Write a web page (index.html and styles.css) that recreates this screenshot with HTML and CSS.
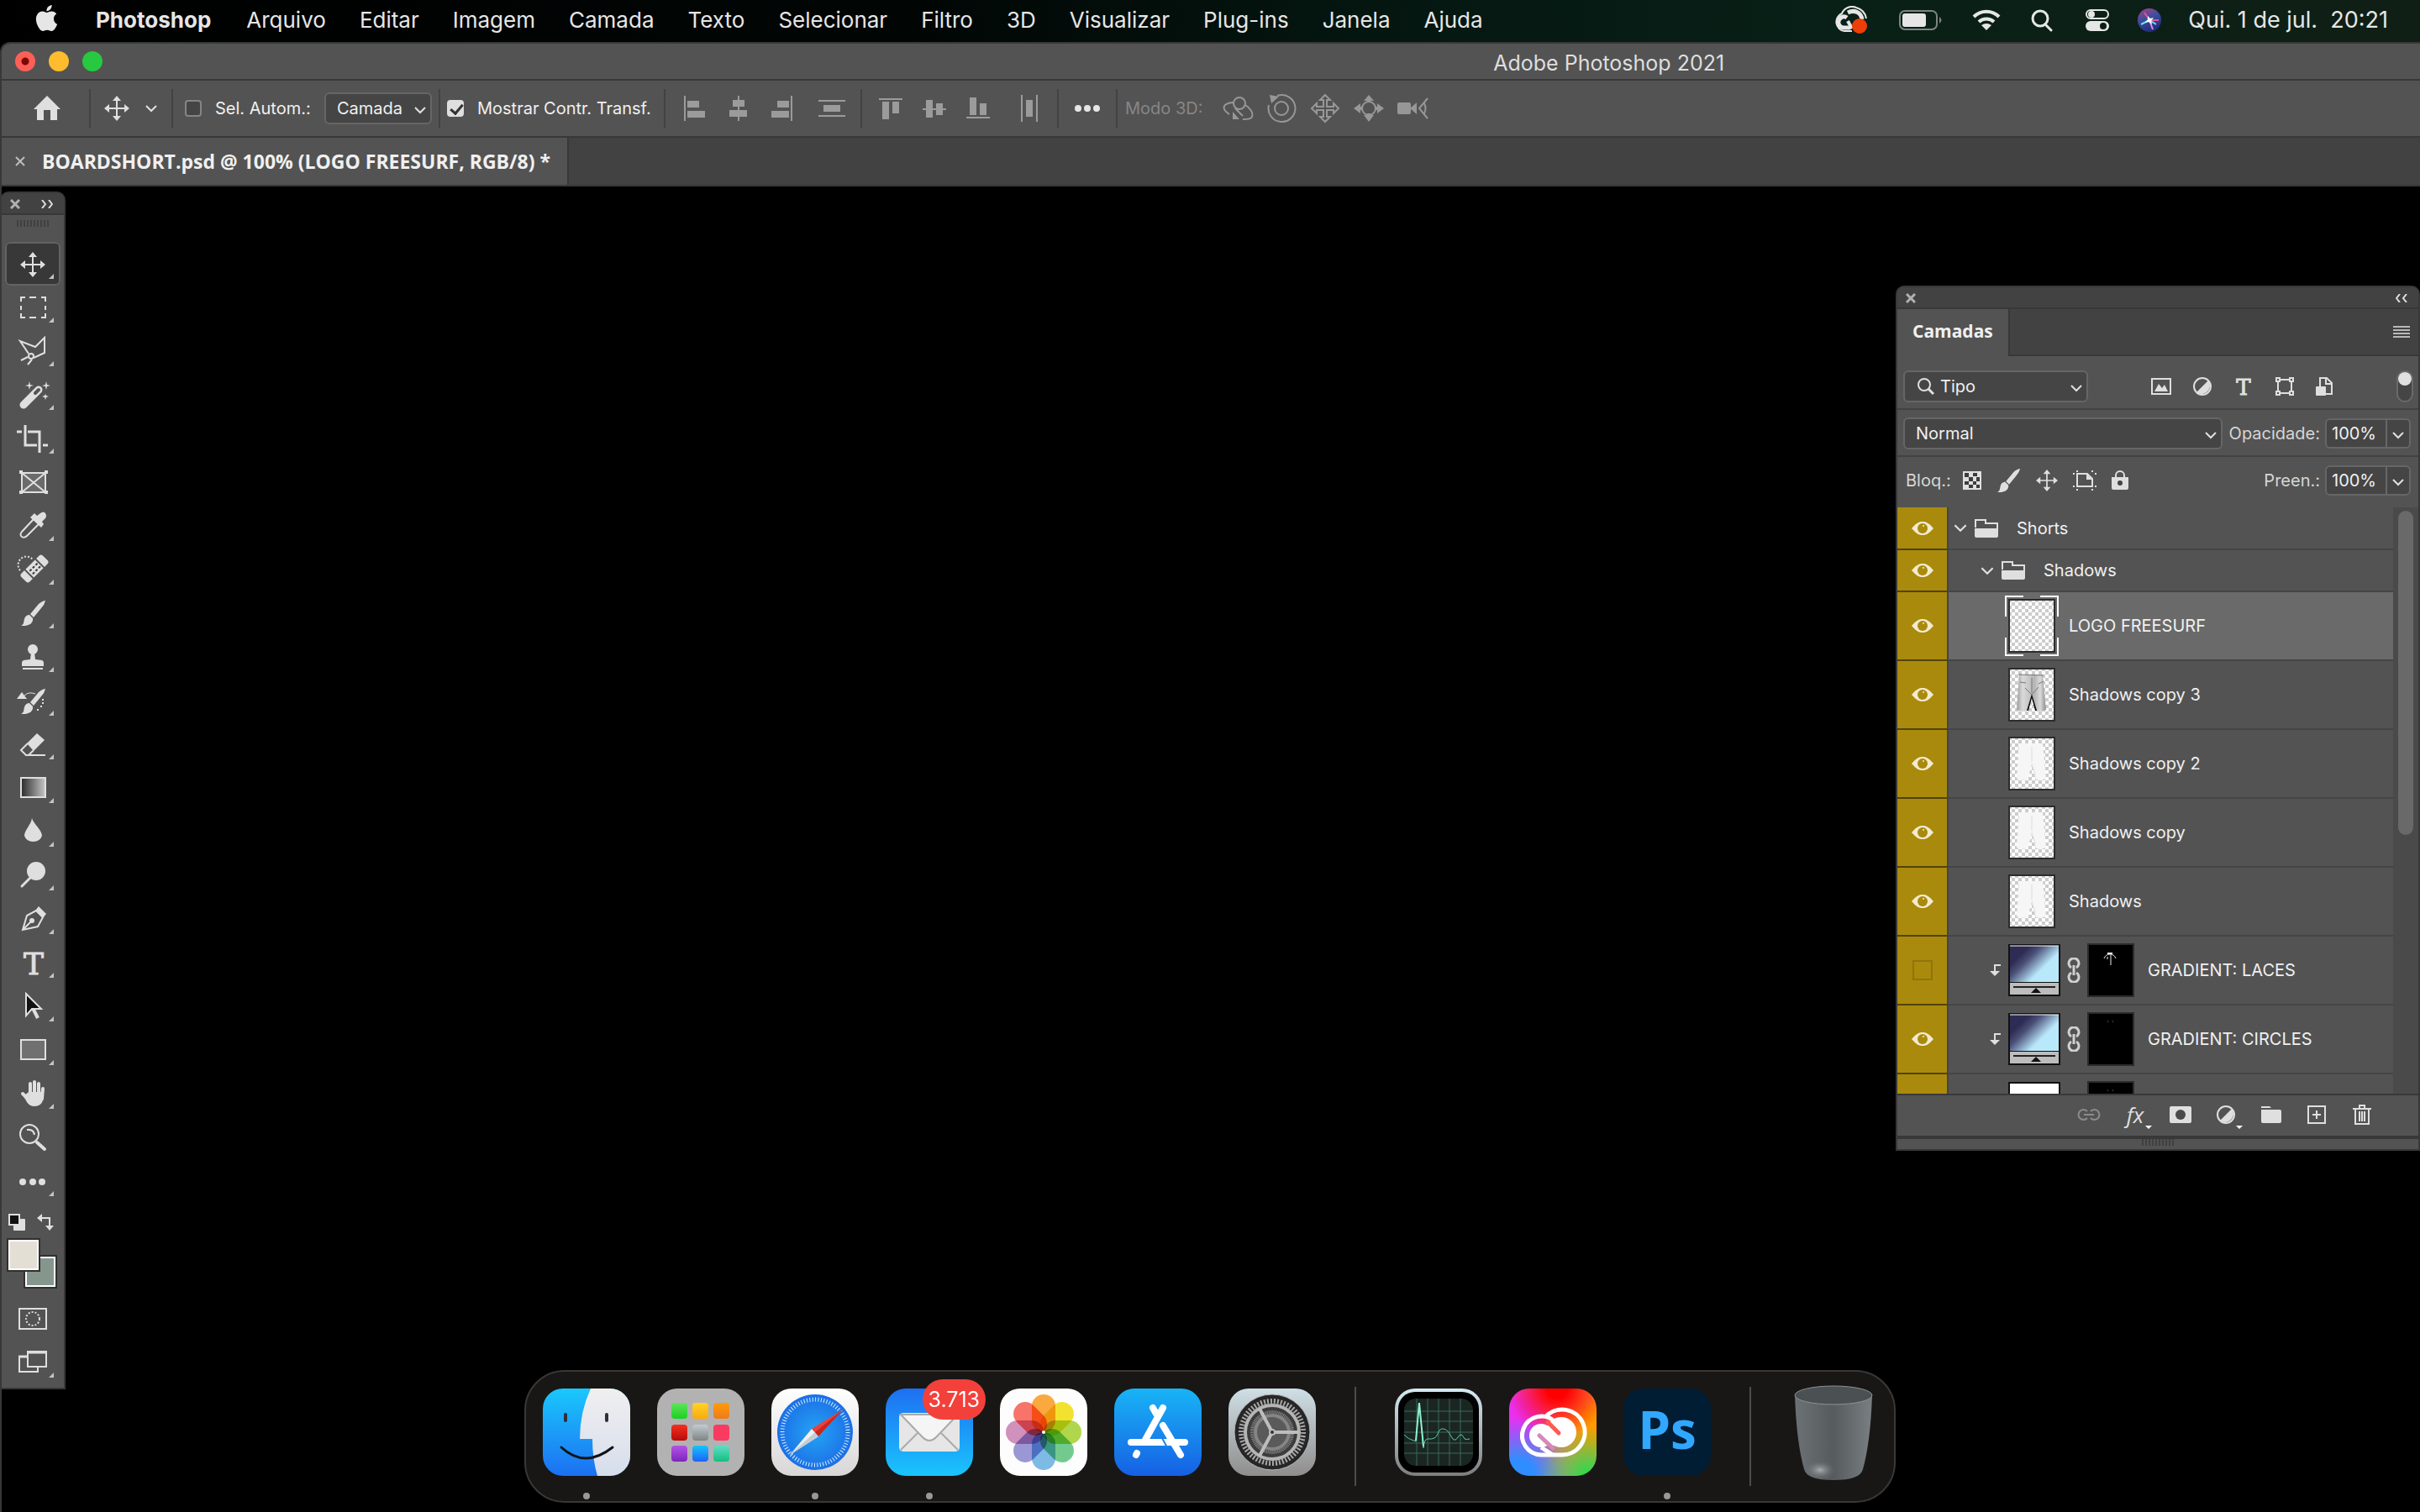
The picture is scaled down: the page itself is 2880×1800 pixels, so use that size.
FILE: index.html
```html
<!DOCTYPE html>
<html lang="pt-BR">
<head>
  <meta charset="UTF-8">
  <meta name="viewport" content="width=device-width, initial-scale=1.0">
  <title>Adobe Photoshop 2021</title>
  <link rel="stylesheet" href="styles.css">
</head>
<body>
  <!-- Shared icons -->
  <svg class="defs" width="0" height="0" aria-hidden="true">
    <defs>
      <linearGradient id="toolGrad"><stop offset="0" stop-color="#2a2a2a"/><stop offset="1" stop-color="#c8c8c8"/></linearGradient>
      <linearGradient id="mapGrad" x1="0.1" y1="0.15" x2="0.9" y2="0.75"><stop offset="0.15" stop-color="#2e2c55"/><stop offset="0.35" stop-color="#4b5078"/><stop offset="0.75" stop-color="#b9e8fb"/></linearGradient>
      <linearGradient id="cloth"><stop offset="0" stop-color="#9a9a9a"/><stop offset="0.2" stop-color="#dadada"/><stop offset="0.45" stop-color="#c4c4c4"/><stop offset="0.6" stop-color="#b4b4b4"/><stop offset="0.8" stop-color="#dadada"/><stop offset="1" stop-color="#8c8c8c"/></linearGradient>
      <pattern id="checker" width="8" height="8" patternUnits="userSpaceOnUse"><rect width="8" height="8" fill="#fff"/><path d="M0 0h4v4h-4zM4 4h4v4h-4z" fill="#ccc"/></pattern>
    </defs>
    <symbol id="chevron" viewBox="0 0 16 10"><path d="M2 2l6 6 6-6" fill="none" stroke="#e0e0e0" stroke-width="2"/></symbol>
    <symbol id="eye" viewBox="0 0 26 16"><path d="M0 8C6 1 9 0 13 0s7 1 13 8c-6 7-9 8-13 8S6 15 0 8z" fill="#f3ead0"/><circle cx="13" cy="8" r="6" fill="#a98a0c"/><circle cx="14" cy="5" r="1" fill="#f3ead0"/></symbol>
    <symbol id="folder" viewBox="0 0 28 22"><path d="M1 10V1h12v4h14v6" fill="none" stroke="#dfdfdf" stroke-width="2"/><path d="M0 11h28v9q0 2-2 2H2q-2 0-2-2z" fill="#dfdfdf"/></symbol>
    <symbol id="move" viewBox="0 0 30 30"><path d="M15 4v22M4 15h22" stroke="#dfdfdf" stroke-width="2"/><path d="M15 0l5 6H10zM15 30l5-6H10zM0 15l6-5v10zM30 15l-6-5v10z" fill="#dfdfdf"/></symbol>
    <symbol id="brush" viewBox="0 0 30 30"><path d="M29 0q-1 5-5 9l-9 11-4-4L21 4q5-4 8-4z" fill="#dfdfdf"/><path d="M10 17l4 4c1 6-5 10-14 9 4-2 3-5 4-8 1-4 4-5 6-5z" fill="#dfdfdf"/></symbol>
    <symbol id="clip" viewBox="0 0 14 14"><path d="M13 1H6v8" fill="none" stroke="#dfdfdf" stroke-width="2"/><path d="M0 8h12l-6 6z" fill="#dfdfdf"/></symbol>
    <symbol id="chain" viewBox="0 0 16 30"><path d="M5 12a6 6 0 1 1 6 0M5 18a6 6 0 1 0 6 0" fill="none" stroke="#d0d0d0" stroke-width="3"/><path d="M8 9v12" stroke="#d0d0d0" stroke-width="3"/></symbol>
    <symbol id="half" viewBox="0 0 22 22"><circle cx="11" cy="11" r="10" fill="none" stroke="#dfdfdf" stroke-width="2"/><path d="M18 4A10 10 0 0 1 4 18z" fill="#dfdfdf"/></symbol>
    <symbol id="shorts" viewBox="0 0 52 60"><path d="M11 6h28l4 42q-6 3-12 1l-5-18-5 18q-7 2-13-1z"/></symbol>
    <symbol id="gradmap" viewBox="0 0 62 62"><rect width="62" height="62" fill="#111"/><rect x="2" y="2" width="58" height="43" fill="url(#mapGrad)"/><path d="M2 2h58" stroke="#fff" stroke-width="1"/><rect x="2" y="46" width="58" height="14" fill="#bdbdbd"/><path d="M6 51h50" stroke="#222" stroke-width="2"/><path d="M33 52l6 6H27z" fill="#111"/></symbol>
  </svg>

  <header class="menubar">
    <svg class="apple" viewBox="0 0 24 24" width="31" height="31"><path fill="#e6e6e6" d="M12.152 6.896c-.948 0-2.415-1.078-3.96-1.04-2.04.027-3.91 1.183-4.961 3.014-2.117 3.675-.546 9.103 1.519 12.09 1.013 1.454 2.208 3.09 3.792 3.039 1.52-.065 2.09-.987 3.935-.987 1.831 0 2.35.987 3.96.948 1.637-.026 2.676-1.48 3.676-2.948 1.156-1.688 1.636-3.325 1.662-3.415-.039-.013-3.182-1.221-3.22-4.857-.026-3.04 2.48-4.494 2.597-4.559-1.429-2.09-3.623-2.324-4.39-2.376-2-.156-3.675 1.09-4.61 1.09zM15.53 3.83c.843-1.012 1.4-2.427 1.245-3.83-1.207.052-2.662.805-3.532 1.818-.78.896-1.454 2.338-1.273 3.714 1.338.104 2.715-.688 3.559-1.701"/></svg>
    <nav class="menus">
      <button class="app-name">Photoshop</button>
      <button>Arquivo</button>
      <button>Editar</button>
      <button>Imagem</button>
      <button>Camada</button>
      <button>Texto</button>
      <button>Selecionar</button>
      <button>Filtro</button>
      <button>3D</button>
      <button>Visualizar</button>
      <button>Plug-ins</button>
      <button>Janela</button>
      <button>Ajuda</button>
    </nav>
    <div class="status">
      <svg width="46" height="34" viewBox="0 0 46 34"><g fill="none" stroke="#e6e6e6" stroke-width="2"><path d="M22 30H13A11 11 0 0 1 10 9a13 13 0 0 1 17-7c7 2 11 7 12 13"/></g><g fill="none" stroke="#e6e6e6" stroke-width="5"><path d="M17 8c8-4 16 0 17 8M20 26H13c-5 0-8-4-7-8s6-7 10-4"/></g><path d="M22 27l-5-9" stroke="#e6e6e6" stroke-width="4"/><circle cx="31" cy="24" r="9" fill="#ee3e08"/></svg>
      <svg width="54" height="26" viewBox="0 0 54 26"><rect x="1" y="2" width="44" height="22" rx="6" fill="none" stroke="#7c857f" stroke-width="2"/><rect x="4" y="5" width="28" height="16" rx="3" fill="#e6e6e6"/><path d="M48 9q5 4 0 8z" fill="#7c857f"/></svg>
      <svg width="36" height="26" viewBox="0 0 36 26"><g fill="none" stroke="#e6e6e6" stroke-width="4"><path d="M3 9a21 21 0 0 1 30 0M9 15a13 13 0 0 1 18 0"/></g><path d="M12 19q6-4 12 0l-6 6z" fill="#e6e6e6"/></svg>
      <svg width="36" height="28" viewBox="0 0 36 28"><g fill="none" stroke="#e6e6e6" stroke-width="3"><circle cx="14" cy="12" r="9"/><path d="M20 19l7 7" stroke-linecap="round"/></g></svg>
      <svg width="30" height="28" viewBox="0 0 30 28"><rect x="1" y="2" width="26" height="10" rx="5" fill="none" stroke="#e6e6e6" stroke-width="2"/><circle cx="7" cy="7" r="4" fill="#e6e6e6"/><rect x="0" y="15" width="28" height="12" rx="6" fill="#e6e6e6"/><circle cx="21" cy="21" r="4" fill="#0c1f16"/></svg>
      <svg width="28" height="28" viewBox="0 0 28 28"><defs><linearGradient id="siri" x1="0" y1="0" x2="0.4" y2="1"><stop offset="0" stop-color="#b0408a"/><stop offset="0.5" stop-color="#3b4e9e"/><stop offset="1" stop-color="#232f80"/></linearGradient></defs><circle cx="14" cy="14" r="14" fill="url(#siri)"/><path d="M14 14L8 5M14 14l11 0" stroke="#e0559b" stroke-width="2"/><path d="M14 14L4 19M14 14l8 5" stroke="#6fe0e0" stroke-width="2"/><path d="M14 14l4 11" stroke="#e58be8" stroke-width="2"/><path d="M12 9l3 3 4-1-3 4 1 4-4-3-4 1 3-4z" fill="#fff"/></svg>
      <time>Qui. 1 de jul. &nbsp;20:21</time>
    </div>
  </header>

  <main class="window">
    <div class="titlebar">
      <div class="lights">
        <button class="light close" aria-label="Fechar"></button>
        <button class="light min" aria-label="Minimizar"></button>
        <button class="light zoom" aria-label="Zoom"></button>
      </div>
      <h1>Adobe Photoshop 2021</h1>
    </div>

    <div class="options">
      <button class="home" aria-label="Início"><svg width="32" height="30" viewBox="0 0 32 30"><path d="M16 0l16 16h-4v13h-8V17h-8v12H4V16H0z" fill="#dfdfdf"/></svg></button>
      <span class="sep"></span>
      <button class="current-tool" aria-label="Mover"><svg width="30" height="30"><use href="#move"/></svg><svg width="16" height="10"><use href="#chevron"/></svg></button>
      <span class="sep"></span>
      <label class="check auto"><input type="checkbox">Sel. Autom.:</label>
      <div class="select layer-kind">
        <select aria-label="Seleção automática"><option>Camada</option></select>
        <svg width="16" height="10"><use href="#chevron"/></svg>
      </div>
      <span class="sep"></span>
      <label class="check transform"><input type="checkbox" checked>Mostrar Contr. Transf.</label>
      <span class="sep"></span>
      <div class="icons group">
        <button aria-label="Alinhar à esquerda"><svg viewBox="0 0 52 52"><path d="M14 11h2v30h-2zM18 17h14v8H18zM18 29h21v8H18z"/></svg></button>
        <button aria-label="Centralizar na horizontal"><svg viewBox="0 0 52 52"><path d="M26 11h2v30h-2zM20 16h14v8H20zM16 28h21v8H16z"/></svg></button>
        <button aria-label="Alinhar à direita"><svg viewBox="0 0 52 52"><path d="M37 11h2v30h-2zM21 17h14v8H21zM14 29h21v8H14z"/></svg></button>
      </div>
      <div class="icons group">
        <button aria-label="Distribuir na vertical"><svg viewBox="0 0 52 52"><path d="M10 16h32v2H10zM10 34h32v2H10zM16 22h20v8H16z"/></svg></button>
      </div>
      <span class="sep"></span>
      <div class="icons group">
        <button aria-label="Alinhar ao topo"><svg viewBox="0 0 52 52"><path d="M12 14h28v2H12zM16 18h8v21h-8zM28 18h8v14h-8z"/></svg></button>
        <button aria-label="Centralizar na vertical"><svg viewBox="0 0 52 52"><path d="M12 26h28v2H12zM16 16h8v21h-8zM28 20h8v14h-8z"/></svg></button>
        <button aria-label="Alinhar à base"><svg viewBox="0 0 52 52"><path d="M12 36h28v2H12zM16 13h8v21h-8zM28 20h8v14h-8z"/></svg></button>
      </div>
      <div class="icons group">
        <button aria-label="Distribuir na horizontal"><svg viewBox="0 0 52 52"><path d="M17 10h2v32h-2zM35 10h2v32h-2zM23 16h8v20h-8z"/></svg></button>
      </div>
      <span class="sep"></span>
      <div class="icons group bright">
        <button aria-label="Mais opções"><svg viewBox="0 0 52 52"><circle cx="15" cy="26" r="4"/><circle cx="26" cy="26" r="4"/><circle cx="37" cy="26" r="4"/></svg></button>
      </div>
      <span class="sep"></span>
      <span class="mode">Modo 3D:</span>
      <div class="icons outline">
        <button aria-label="Orbitar"><svg viewBox="0 0 52 52"><circle cx="28" cy="20" r="7"/><path d="M21 19c-7 0-13 3-11 8 1 3 3 4 6 6M35 22c5 3 10 9 8 14-1 3-6 3-11 3M23 26l9 9"/><path class="solid" d="M20 30v9h-6 14z"/></svg></button>
        <button aria-label="Rolar"><svg viewBox="0 0 52 52"><circle cx="26" cy="26" r="8"/><path d="M11 22a16 16 0 1 0 10-11"/><path class="solid" d="M12 10l11 2-9 8z"/></svg></button>
        <button aria-label="Deslocar"><svg viewBox="0 0 52 52"><path d="M26 10l6 6h-4v8h8v-4l6 6-6 6v-4h-8v8h4l-6 6-6-6h4v-8h-8v4l-6-6 6-6v4h8v-8h-4z"/></svg></button>
        <button aria-label="Deslizar"><svg viewBox="0 0 52 52"><circle cx="26" cy="26" r="8"/><path class="solid" d="M26 10l6 7h-4v2h-4v-2h-4zM8 26l8-6v4h3v4h-3v4zM44 26l-8-6v4h-3v4h3v4zM26 42l6-8h-4v-2h-4v2h-4z"/></svg></button>
        <button aria-label="Câmera 3D"><svg viewBox="0 0 52 52"><rect class="solid" x="8" y="19" width="16" height="14" rx="2"/><path class="solid" d="M23 26l8-7v14z"/><path d="M44 14L34 26l10 12M40 20q3 6 0 12"/></svg></button>
      </div>
    </div>

    <div class="tabs">
      <div class="tab">
        <button class="x" aria-label="Fechar documento"><svg width="12" height="12" viewBox="0 0 12 12"><path d="M1 1l10 10M11 1L1 11" stroke="#bdbdbd" stroke-width="2"/></svg></button>
        <span>BOARDSHORT.psd @ 100% (LOGO FREESURF, RGB/8) *</span>
      </div>
    </div>

    <div class="canvas">
      <aside class="toolbox">
        <div class="panel-head">
          <button aria-label="Fechar"><svg width="12" height="12" viewBox="0 0 12 12"><path d="M1 1l10 10M11 1L1 11" stroke="#b0b0b0" stroke-width="3"/></svg></button>
          <button aria-label="Expandir"><svg width="14" height="10" viewBox="0 0 14 10"><path d="M1 0l4 5-4 5M9 0l4 5-4 5" fill="none" stroke="#dfdfdf" stroke-width="2"/></svg></button>
        </div>
        <div class="grip"></div>
        <div class="tools">
          <button class="tool active" aria-label="Mover"><svg viewBox="0 0 66 52"><use href="#move" x="18" y="12" width="30" height="30"/><path class="more" d="M58 38v6h-6z"/></svg></button>
          <button class="tool" aria-label="Letreiro"><svg viewBox="0 0 66 52"><path class="line" d="M19 19v-5h5M29 14h8M43 14h5v5M48 24v5M48 33v5h-5M37 38h-8M24 38h-5v-5M19 29v-5"/><path class="more" d="M58 38v6h-6z"/></svg></button>
          <button class="tool" aria-label="Laço poligonal"><svg viewBox="0 0 66 52"><path class="line" d="M28 29L18 14l18 7L47 10v18l-13 6M27 33l-8 4M32 36l-5 6"/><circle class="line" cx="31" cy="32" r="3"/><path class="more" d="M58 38v6h-6z"/></svg></button>
          <button class="tool" aria-label="Varinha mágica"><svg viewBox="0 0 66 52"><path d="M22 38L40 20" stroke="#dfdfdf" stroke-width="9" stroke-linecap="round"/><path d="M36 24l4-4" stroke="#535353" stroke-width="4" stroke-linecap="round"/><path class="fill" d="M29 10l1 4 4 1-4 1-1 4-1-4-4-1 4-1zM49 10l1 4 4 1-4 1-1 4-1-4-4-1 4-1zM48 25l1 2 3 1-3 1-1 3-1-3-3-1 3-1z"/><path class="more" d="M58 38v6h-6z"/></svg></button>
          <button class="tool" aria-label="Corte demarcado"><svg viewBox="0 0 66 52"><path class="line thick" d="M24 10v24h14M45 34h6M14 18h6M27 18h14v25"/><path class="more" d="M58 38v6h-6z"/></svg></button>
          <button class="tool" aria-label="Quadro"><svg viewBox="0 0 66 52"><rect class="line" x="20" y="15" width="28" height="23" fill="#6b6b6b"/><path class="line" d="M20 15l28 23M48 15L20 38"/><path class="fill" d="M17 12h4v4h-4zM47 12h4v4h-4zM17 36h4v4h-4zM47 36h4v4h-4z"/></svg></button>
          <button class="tool" aria-label="Conta-gotas"><svg viewBox="0 0 66 52"><path class="line" d="M34 18L20 33q-3 4 0 6t6-1l14-14"/><path class="fill" d="M32 14l3-3 3 3 4-3q4-3 6 0t0 6l-4 4 2 3-3 4-13-12z"/><path class="more" d="M58 38v6h-6z"/></svg></button>
          <button class="tool" aria-label="Recuperação"><svg viewBox="0 0 66 52"><g transform="rotate(-45 35 25)"><path class="fill" d="M20 18h5v14h-5q-3 0-3-3v-8q0-3 3-3zM45 18h5q3 0 3 3v8q0 3-3 3h-5z"/><rect class="fill" x="27" y="18" width="16" height="14"/><path d="M29 22h3v2h-3zM34 22h3v2h-3zM39 22h3v2h-3zM29 27h3v2h-3zM34 27h3v2h-3zM39 27h3v2h-3z" fill="#3a3a3a"/></g><path d="M18 27a9 9 0 1 1 15-13" fill="none" stroke="#dfdfdf" stroke-width="2" stroke-dasharray="2 2"/><path class="more" d="M58 38v6h-6z"/></svg></button>
          <button class="tool" aria-label="Pincel"><svg viewBox="0 0 66 52"><use href="#brush" x="19" y="11" width="30" height="30"/><path class="more" d="M58 38v6h-6z"/></svg></button>
          <button class="tool" aria-label="Carimbo"><svg viewBox="0 0 66 52"><circle class="fill" cx="33" cy="17" r="6"/><path class="fill" d="M31 21h4l1 8 8 1q2 1 2 3v4H20v-4q0-2 2-3l8-1z"/><path class="line" d="M21 40h24"/><path class="more" d="M58 38v6h-6z"/></svg></button>
          <button class="tool" aria-label="Pincel do histórico"><svg viewBox="0 0 66 52"><use href="#brush" x="19" y="12" width="30" height="30"/><path class="fill" d="M14 24h12l-6-8zM44 24h2v2h-2zM44 28h2v2h-2zM42 32h2v2h-2zM38 36h2v2h-2z"/><path class="line thin" d="M23 20q5-5 13-2"/><path class="more" d="M58 38v6h-6z"/></svg></button>
          <button class="tool" aria-label="Borracha"><svg viewBox="0 0 66 52"><path class="fill" d="M38 13l9 8-13 13-8-9z"/><path class="line" d="M27 25l-8 8 6 6h23M28 39l6-6"/><path class="more" d="M58 38v6h-6z"/></svg></button>
          <button class="tool" aria-label="Degradê"><svg viewBox="0 0 66 52"><rect x="19" y="14" width="29" height="23" fill="url(#toolGrad)" stroke="#dfdfdf" stroke-width="2"/><path class="more" d="M58 38v6h-6z"/></svg></button>
          <button class="tool" aria-label="Desfoque"><svg viewBox="0 0 66 52"><path class="fill" d="M32 10c2 7 12 14 12 21a11 10 0 0 1-21 0c0-7 8-13 9-21z"/><path class="more" d="M58 38v6h-6z"/></svg></button>
          <button class="tool" aria-label="Subexposição"><svg viewBox="0 0 66 52"><circle class="fill" cx="37" cy="21" r="11"/><path class="line thick" d="M31 28L20 39" stroke-linecap="round"/><path class="more" d="M58 38v6h-6z"/></svg></button>
          <button class="tool" aria-label="Caneta"><svg viewBox="0 0 66 52"><path class="line" d="M21 39l5-17 11-6 8 8-6 11zM22 38l10-10"/><path class="fill" d="M40 11l9 9-4 5-9-9z"/><circle class="fill" cx="32" cy="28" r="3"/><path class="more" d="M58 38v6h-6z"/></svg></button>
          <button class="tool" aria-label="Texto"><svg viewBox="0 0 66 52"><text x="34" y="40" class="glyph">T</text><path class="more" d="M58 38v6h-6z"/></svg></button>
          <button class="tool" aria-label="Seleção de caminho"><svg viewBox="0 0 66 52"><path d="M33 28l6 12" stroke="#dfdfdf" stroke-width="4"/><path d="M25 11v26l7-8h11z" fill="#111" stroke="#dfdfdf" stroke-width="2"/><path class="more" d="M58 38v6h-6z"/></svg></button>
          <button class="tool" aria-label="Retângulo"><svg viewBox="0 0 66 52"><rect class="line" x="19" y="14" width="29" height="23" fill="#707070"/><path class="more" d="M58 38v6h-6z"/></svg></button>
          <button class="tool" aria-label="Mão"><svg viewBox="0 0 66 52"><path d="M30 14v14M35 12v14M40 14v14M45 20l-1 12M21 26l8 8" stroke="#dfdfdf" stroke-width="4" stroke-linecap="round"/><path class="fill" d="M28 24h18l-1 10q-2 7-10 7-6 0-9-5l-4-7z"/><path class="more" d="M58 38v6h-6z"/></svg></button>
          <button class="tool" aria-label="Zoom"><svg viewBox="0 0 66 52"><circle class="line" cx="29" cy="22" r="11"/><path class="line" d="M26 17q8-1 9 6"/><path d="M38 32l9 8" stroke="#dfdfdf" stroke-width="4" stroke-linecap="round"/></svg></button>
          <button class="tool" aria-label="Mais ferramentas"><svg viewBox="0 0 66 52"><circle class="fill" cx="21" cy="27" r="4"/><circle class="fill" cx="33" cy="27" r="4"/><circle class="fill" cx="44" cy="27" r="4"/><path class="more" d="M58 38v6h-6z"/></svg></button>
        </div>
        <div class="colors">
          <div class="color-actions">
            <button aria-label="Cores padrão"><svg width="20" height="20" viewBox="0 0 20 20"><rect x="6" y="6" width="14" height="14" rx="1" fill="#dfdfdf"/><rect x="1" y="1" width="12" height="12" fill="#111" stroke="#dfdfdf" stroke-width="2"/></svg></button>
            <button aria-label="Alternar cores"><svg width="20" height="20" viewBox="0 0 20 20"><path d="M4 5h11v11" fill="none" stroke="#dfdfdf" stroke-width="2"/><path d="M0 5l6-5v10zM15 20l-5-6h10z" fill="#dfdfdf"/></svg></button>
          </div>
          <div class="swatches">
            <button class="swatch back" aria-label="Plano de fundo"></button>
            <button class="swatch front" aria-label="Primeiro plano"></button>
          </div>
        </div>
        <button class="tool" aria-label="Máscara rápida"><svg viewBox="0 0 66 52"><rect class="line" x="17" y="14" width="32" height="24"/><circle cx="33" cy="26" r="8" fill="none" stroke="#dfdfdf" stroke-width="2" stroke-dasharray="2 2"/></svg></button>
        <button class="tool" aria-label="Modo de tela"><svg viewBox="0 0 66 52"><path class="line" d="M17 18v19h22v-5"/><path class="line thick" d="M16 19h10M26 14h24"/><rect class="line" x="27" y="13" width="22" height="18"/><path class="more" d="M58 38v6h-6z"/></svg></button>
      </aside>

      <section class="layers">
        <div class="panel-head">
          <button aria-label="Fechar"><svg width="12" height="12" viewBox="0 0 12 12"><path d="M1 1l10 10M11 1L1 11" stroke="#b0b0b0" stroke-width="3"/></svg></button>
          <button aria-label="Recolher"><svg width="14" height="10" viewBox="0 0 14 10"><path d="M5 0L1 5l4 5M13 0L9 5l4 5" fill="none" stroke="#dfdfdf" stroke-width="2"/></svg></button>
        </div>
        <div class="panel-tabs">
          <h2>Camadas</h2>
          <button class="panel-menu" aria-label="Menu do painel"><svg width="20" height="14" viewBox="0 0 20 14"><path d="M0 1h20M0 5h20M0 9h20M0 13h20" stroke="#b8b8b8" stroke-width="2"/></svg></button>
        </div>
        <div class="row filter-row">
          <div class="select filter">
            <svg class="lens" width="20" height="20" viewBox="0 0 20 20"><circle cx="8" cy="8" r="7" fill="none" stroke="#dfdfdf" stroke-width="2"/><path d="M13 13l6 6" stroke="#dfdfdf" stroke-width="3"/></svg>
            <select aria-label="Filtrar camadas"><option>Tipo</option></select>
            <svg width="16" height="10"><use href="#chevron"/></svg>
          </div>
          <div class="filter-icons">
            <button aria-label="Pixels"><svg width="24" height="20" viewBox="0 0 24 20"><rect x="1" y="1" width="22" height="18" fill="none" stroke="#dfdfdf" stroke-width="2"/><path d="M4 16l5-9 4 5 3-4 4 8z" fill="#dfdfdf"/></svg></button>
            <button aria-label="Ajustes"><svg width="22" height="22"><use href="#half"/></svg></button>
            <button aria-label="Texto"><svg width="24" height="34" viewBox="0 0 24 34"><text x="12" y="27" class="glyph small">T</text></svg></button>
            <button aria-label="Formas"><svg width="22" height="22" viewBox="0 0 22 22"><path d="M5 3h12M5 19h12M3 5v12M19 5v12" stroke="#dfdfdf" stroke-width="2"/><path d="M1 1h4v4H1zM17 1h4v4h-4zM1 17h4v4H1zM17 17h4v4h-4z" fill="#535353" stroke="#dfdfdf" stroke-width="2"/></svg></button>
            <button aria-label="Objetos"><svg width="20" height="22" viewBox="0 0 20 22"><path d="M5 11V1h8l6 6v13h-7M12 1v7h7" fill="none" stroke="#dfdfdf" stroke-width="2"/><rect y="11" width="12" height="11" rx="1" fill="#dfdfdf"/></svg></button>
          </div>
          <button class="toggle" aria-label="Ativar filtro"></button>
        </div>
        <div class="row blend-row">
          <div class="select blend">
            <select aria-label="Modo de mesclagem"><option>Normal</option></select>
            <svg width="16" height="10"><use href="#chevron"/></svg>
          </div>
          <label for="opacity">Opacidade:</label>
          <div class="amount"><input id="opacity" type="text" value="100%"><button aria-label="Ajustar opacidade"><svg width="16" height="10"><use href="#chevron"/></svg></button></div>
        </div>
        <div class="row lock-row">
          <span>Bloq.:</span>
          <div class="lock-icons">
            <button aria-label="Pixels transparentes"><svg width="24" height="24" viewBox="0 0 24 24"><rect x="1" y="1" width="22" height="22" fill="#dfdfdf"/><path d="M3 3h5v5H3zM13 3h5v4h-5zM8 8h5v5H8zM17 8h4v5h-4zM3 13h5v4H3zM13 13h4v4h-4zM8 17h5v4H8zM17 17h4v4h-4z" fill="#3c3c3c"/></svg></button>
            <button aria-label="Pixels da imagem"><svg width="28" height="28"><use href="#brush"/></svg></button>
            <button aria-label="Posição"><svg width="26" height="26"><use href="#move"/></svg></button>
            <button aria-label="Prancheta"><svg width="28" height="24" viewBox="0 0 28 24"><path d="M5 4h12l6 6v9H5z" fill="none" stroke="#dfdfdf" stroke-width="2"/><path d="M16 4v7h7z" fill="#dfdfdf"/><path d="M0 3h2v2H0zM4 0h2v2H4zM22 0h2v2h-2zM26 3h2v2h-2zM0 18h2v2H0zM4 22h2v2H4zM22 22h2v2h-2zM26 18h2v2h-2z" fill="#dfdfdf"/></svg></button>
            <button aria-label="Tudo"><svg width="20" height="24" viewBox="0 0 20 24"><path d="M5 10V6a5 5 0 0 1 10 0v4" fill="none" stroke="#dfdfdf" stroke-width="2"/><path d="M0 8h20v13q0 2-2 2H2q-2 0-2-2z" fill="#dfdfdf"/><circle cx="10" cy="15" r="3" fill="#444"/></svg></button>
          </div>
          <label for="fill">Preen.:</label>
          <div class="amount"><input id="fill" type="text" value="100%"><button aria-label="Ajustar preenchimento"><svg width="16" height="10"><use href="#chevron"/></svg></button></div>
        </div>

        <div class="list-wrap">
          <ul class="layer-list">
            <li class="layer group-row">
              <button class="vis" aria-label="Visibilidade"><svg width="26" height="16"><use href="#eye"/></svg></button>
              <div class="info"><svg width="18" height="11"><use href="#chevron"/></svg><svg width="28" height="22"><use href="#folder"/></svg><span>Shorts</span></div>
            </li>
            <li class="layer group-row nested">
              <button class="vis" aria-label="Visibilidade"><svg width="26" height="16"><use href="#eye"/></svg></button>
              <div class="info"><svg width="18" height="11"><use href="#chevron"/></svg><svg width="28" height="22"><use href="#folder"/></svg><span>Shadows</span></div>
            </li>
            <li class="layer pixel selected">
              <button class="vis" aria-label="Visibilidade"><svg width="26" height="16"><use href="#eye"/></svg></button>
              <div class="info"><svg width="64" height="72" viewBox="-4 -4 64 72"><rect x="1" y="1" width="54" height="62" fill="url(#checker)" stroke="#2c2c2c" stroke-width="2"/><path d="M-3 21V-3h21M38-3h21v24M59 46v21H38M18 67H-3V46" fill="none" stroke="#fff" stroke-width="2"/></svg><span>LOGO FREESURF</span></div>
            </li>
            <li class="layer pixel">
              <button class="vis" aria-label="Visibilidade"><svg width="26" height="16"><use href="#eye"/></svg></button>
              <div class="info"><svg width="64" height="72" viewBox="-4 -4 64 72"><rect x="1" y="1" width="54" height="62" fill="url(#checker)" stroke="#2c2c2c" stroke-width="2"/><use href="#shorts" x="2" y="2" width="52" height="60" fill="url(#cloth)"/><path d="M28 31l6 20h-2l-4-15-4 15h-2z" fill="#111"/><path d="M12 8l30 1M28 12v18M14 17l7 1M42 16l-6 3M20 24l8 8 8-9" fill="none" stroke="#777" stroke-width="1"/></svg><span>Shadows copy 3</span></div>
            </li>
            <li class="layer pixel">
              <button class="vis" aria-label="Visibilidade"><svg width="26" height="16"><use href="#eye"/></svg></button>
              <div class="info"><svg width="64" height="72" viewBox="-4 -4 64 72"><rect x="1" y="1" width="54" height="62" fill="url(#checker)" stroke="#2c2c2c" stroke-width="2"/><use href="#shorts" x="2" y="2" width="52" height="60" fill="#f6f6f6"/><path d="M28 32l4 13M28 12v18" fill="none" stroke="#ddd" stroke-width="1"/></svg><span>Shadows copy 2</span></div>
            </li>
            <li class="layer pixel">
              <button class="vis" aria-label="Visibilidade"><svg width="26" height="16"><use href="#eye"/></svg></button>
              <div class="info"><svg width="64" height="72" viewBox="-4 -4 64 72"><rect x="1" y="1" width="54" height="62" fill="url(#checker)" stroke="#2c2c2c" stroke-width="2"/><use href="#shorts" x="2" y="2" width="52" height="60" fill="#f6f6f6"/><path d="M28 32l4 13M28 12v18" fill="none" stroke="#ddd" stroke-width="1"/></svg><span>Shadows copy</span></div>
            </li>
            <li class="layer pixel">
              <button class="vis" aria-label="Visibilidade"><svg width="26" height="16"><use href="#eye"/></svg></button>
              <div class="info"><svg width="64" height="72" viewBox="-4 -4 64 72"><rect x="1" y="1" width="54" height="62" fill="url(#checker)" stroke="#2c2c2c" stroke-width="2"/><use href="#shorts" x="2" y="2" width="52" height="60" fill="#f6f6f6"/><path d="M28 32l4 13M28 12v18" fill="none" stroke="#ddd" stroke-width="1"/></svg><span>Shadows</span></div>
            </li>
            <li class="layer adjust">
              <button class="vis" aria-label="Visibilidade"><i class="off"></i></button>
              <div class="info"><svg width="14" height="14"><use href="#clip"/></svg><svg width="62" height="62"><use href="#gradmap"/></svg><svg width="16" height="30"><use href="#chain"/></svg><svg width="56" height="64" viewBox="0 0 56 64"><rect x="1" y="1" width="54" height="62" stroke="#2c2c2c" stroke-width="2"/><path d="M20 18q2-5 7-5t7 5M28 14v12M24 16v3" fill="none" stroke="#eee" stroke-width="1"/><path d="M24 12h6" stroke="#fff" stroke-width="2"/></svg><span>GRADIENT: LACES</span></div>
            </li>
            <li class="layer adjust">
              <button class="vis" aria-label="Visibilidade"><svg width="26" height="16"><use href="#eye"/></svg></button>
              <div class="info"><svg width="14" height="14"><use href="#clip"/></svg><svg width="62" height="62"><use href="#gradmap"/></svg><svg width="16" height="30"><use href="#chain"/></svg><svg width="56" height="64" viewBox="0 0 56 64"><rect x="1" y="1" width="54" height="62" stroke="#2c2c2c" stroke-width="2"/><path d="M24 11h1M30 11h1" stroke="#888" stroke-width="1"/></svg><span>GRADIENT: CIRCLES</span></div>
            </li>
            <li class="layer adjust">
              <button class="vis" aria-label="Visibilidade"></button>
              <div class="info"><svg width="14" height="14"></svg><svg width="62" height="62" viewBox="0 0 62 62"><rect x="1" y="1" width="60" height="60" fill="#fff" stroke="#111" stroke-width="2"/></svg><svg width="16" height="30"></svg><svg width="56" height="64" viewBox="0 0 56 64"><rect x="1" y="1" width="54" height="62" stroke="#2c2c2c" stroke-width="2"/><path d="M24 11h1M30 11h1" stroke="#888" stroke-width="1"/></svg></div>
            </li>
          </ul>
          <div class="scroll"><div class="thumb"></div></div>
        </div>

        <div class="panel-foot">
          <button aria-label="Vincular"><svg width="28" height="16" viewBox="0 0 28 16"><path d="M12 12a6 6 0 1 1 0-8M16 4a6 6 0 1 1 0 8M8 8h12" fill="none" stroke="#8c8c8c" stroke-width="2"/></svg></button>
          <button class="fx drop" aria-label="Estilo">fx</button>
          <button aria-label="Máscara"><svg width="26" height="20" viewBox="0 0 26 20"><rect width="26" height="20" rx="2" fill="#dfdfdf"/><circle cx="13" cy="10" r="6" fill="#4a4a4a"/></svg></button>
          <button class="drop" aria-label="Ajuste"><svg width="22" height="22"><use href="#half"/></svg></button>
          <button aria-label="Grupo"><svg width="24" height="20" viewBox="0 0 24 20"><path d="M0 0h10l2 2H0zM0 4h22q2 0 2 2v12q0 2-2 2H2q-2 0-2-2z" fill="#dfdfdf"/></svg></button>
          <button aria-label="Nova camada"><svg width="22" height="22" viewBox="0 0 22 22"><path d="M1 1h20v20H1zM6 11h10M11 6v10" fill="none" stroke="#dfdfdf" stroke-width="2"/></svg></button>
          <button aria-label="Excluir"><svg width="22" height="24" viewBox="0 0 22 24"><path d="M0 5h22M8 5V1h6v4M3 5v18h16V5M8 8v12M11 8v12M14 8v12" fill="none" stroke="#dfdfdf" stroke-width="2"/></svg></button>
        </div>
        <div class="resize"><div class="grip"></div></div>
      </section>
    </div>
  </main>

  <footer class="dock">
    <a class="app running" href="#" aria-label="Finder"><svg viewBox="0 0 104 104">
      <defs><linearGradient id="fA" x2="0" y2="1"><stop offset="0" stop-color="#1ac8fd"/><stop offset="1" stop-color="#1c70f2"/></linearGradient><linearGradient id="fB" x2="0" y2="1"><stop offset="0" stop-color="#f0eff0"/><stop offset="1" stop-color="#d6deec"/></linearGradient><clipPath id="sq"><rect width="104" height="104" rx="24"/></clipPath></defs>
      <g clip-path="url(#sq)"><rect width="104" height="104" fill="url(#fA)"/><path d="M57 0Q44 28 44 60h15q0 24 6 44h40V0z" fill="url(#fB)"/></g>
      <path d="M27 31v7M76 31v7" stroke="#2c3038" stroke-width="4" stroke-linecap="round"/><path d="M22 70q28 26 61 0" fill="none" stroke="#101418" stroke-width="3" stroke-linecap="round"/></svg></a>
    <a class="app" href="#" aria-label="Launchpad"><svg viewBox="0 0 104 104">
      <defs>
        <linearGradient id="l1" x2="0" y2="1"><stop offset="0" stop-color="#62e35c"/><stop offset="1" stop-color="#1bd122"/></linearGradient>
        <linearGradient id="l2" x2="0" y2="1"><stop offset="0" stop-color="#ffd32a"/><stop offset="1" stop-color="#fbaa0c"/></linearGradient>
        <linearGradient id="l3" x2="0" y2="1"><stop offset="0" stop-color="#fd9c09"/><stop offset="1" stop-color="#ee7a1c"/></linearGradient>
        <linearGradient id="l4" x2="0" y2="1"><stop offset="0" stop-color="#f4301f"/><stop offset="1" stop-color="#b80c0a"/></linearGradient>
        <linearGradient id="l5" x2="0" y2="1"><stop offset="0" stop-color="#c2ccd3"/><stop offset="1" stop-color="#7f8383"/></linearGradient>
        <linearGradient id="l7" x2="0" y2="1"><stop offset="0" stop-color="#b553e4"/><stop offset="1" stop-color="#7c26bd"/></linearGradient>
        <linearGradient id="l8" x2="0" y2="1"><stop offset="0" stop-color="#15c4fd"/><stop offset="1" stop-color="#1f62f5"/></linearGradient>
        <linearGradient id="l9" x2="0" y2="1"><stop offset="0" stop-color="#62dcc4"/><stop offset="1" stop-color="#14bf7f"/></linearGradient>
      </defs>
      <rect width="104" height="104" rx="24" fill="#b2b2b2"/>
      <rect x="17" y="17" width="19" height="19" rx="4" fill="url(#l1)"/><rect x="42" y="17" width="19" height="19" rx="4" fill="url(#l2)"/><rect x="67" y="17" width="19" height="19" rx="4" fill="url(#l3)"/>
      <rect x="17" y="43" width="19" height="19" rx="4" fill="url(#l4)"/><rect x="42" y="43" width="19" height="19" rx="4" fill="url(#l5)"/><rect x="67" y="43" width="19" height="19" rx="4" fill="#fb3a62"/>
      <rect x="17" y="68" width="19" height="19" rx="4" fill="url(#l7)"/><rect x="42" y="68" width="19" height="19" rx="4" fill="url(#l8)"/><rect x="67" y="68" width="19" height="19" rx="4" fill="url(#l9)"/></svg></a>
    <a class="app running" href="#" aria-label="Safari"><svg viewBox="0 0 104 104">
      <defs><linearGradient id="sA" x2="0" y2="1"><stop offset="0" stop-color="#fff"/><stop offset="1" stop-color="#d8d6d6"/></linearGradient><radialGradient id="sB"><stop offset="0" stop-color="#24a4f4"/><stop offset="1" stop-color="#1c6fe6"/></radialGradient></defs>
      <rect width="104" height="104" rx="24" fill="url(#sA)"/><circle cx="52" cy="52" r="45" fill="url(#sB)"/>
      <circle cx="52" cy="52" r="39" fill="none" stroke="#d8f0fd" stroke-width="5" stroke-dasharray="1 2.4"/>
      <path d="M85 25L56 57l-8-9z" fill="#ee4037"/><path d="M22 79l26-31 8 9z" fill="#f0f0f0"/><path d="M52 52l4 5L22 79z" fill="#c3cdd6"/><path d="M52 52l4 5 29-32z" fill="#c8261f"/></svg></a>
    <a class="app running" href="#" aria-label="Mail"><svg viewBox="0 0 104 104">
      <defs><linearGradient id="mA" x2="0" y2="1"><stop offset="0" stop-color="#1e6ff2"/><stop offset="1" stop-color="#1ac5fd"/></linearGradient></defs>
      <rect width="104" height="104" rx="24" fill="url(#mA)"/><rect x="16" y="29" width="72" height="46" rx="5" fill="#e6e6e6"/>
      <path d="M18 73l20-20M86 73L66 53" stroke="#aaa" stroke-width="2"/><path d="M18 31l26 27q8 8 16 0l26-27z" fill="#f5f5f5" stroke="#aaa" stroke-width="2"/></svg><span class="badge">3.713</span></a>
    <a class="app" href="#" aria-label="Fotos"><svg viewBox="0 0 104 104">
      <rect width="104" height="104" rx="24" fill="#fdfdfd"/>
      <g class="petals">
        <rect x="38" y="7" width="28" height="45" rx="14" fill="#fb9c1c"/>
        <rect x="38" y="7" width="28" height="45" rx="14" fill="#f3df0a" transform="rotate(45 52 52)"/>
        <rect x="38" y="7" width="28" height="45" rx="14" fill="#a5d12c" transform="rotate(90 52 52)"/>
        <rect x="38" y="7" width="28" height="45" rx="14" fill="#5cc37c" transform="rotate(135 52 52)"/>
        <rect x="38" y="7" width="28" height="45" rx="14" fill="#68b0e4" transform="rotate(180 52 52)"/>
        <rect x="38" y="7" width="28" height="45" rx="14" fill="#8a86cf" transform="rotate(225 52 52)"/>
        <rect x="38" y="7" width="28" height="45" rx="14" fill="#ca7fb4" transform="rotate(270 52 52)"/>
        <rect x="38" y="7" width="28" height="45" rx="14" fill="#fa5c50" transform="rotate(315 52 52)"/>
      </g><circle cx="52" cy="52" r="2" fill="#fff"/></svg></a>
    <a class="app" href="#" aria-label="App Store"><svg viewBox="0 0 104 104">
      <defs><linearGradient id="aA" x2="0" y2="1"><stop offset="0" stop-color="#18b4f6"/><stop offset="1" stop-color="#1660e4"/></linearGradient></defs>
      <rect width="104" height="104" rx="24" fill="url(#aA)"/>
      <g stroke="#fff" stroke-width="8" stroke-linecap="round"><path d="M20 64h64M46 23l4 7M58 44l21 35M27 77l-1 2"/><path d="M37 61l21-38"/></g><path d="M57 59l6 11" stroke="#1a84ee" stroke-width="2"/></svg></a>
    <a class="app" href="#" aria-label="Preferências do Sistema"><svg viewBox="0 0 104 104">
      <defs><linearGradient id="gA" x2="0" y2="1"><stop offset="0" stop-color="#cfdfe6"/><stop offset="1" stop-color="#8f8d8c"/></linearGradient></defs>
      <rect width="104" height="104" rx="24" fill="url(#gA)"/><circle cx="52" cy="52" r="45" fill="#262626" stroke="#b9b9b9" stroke-width="1"/>
      <circle cx="52" cy="52" r="37" fill="none" stroke="#a8a8a8" stroke-width="6" stroke-dasharray="2 2"/><circle cx="52" cy="52" r="32" fill="#3c3c3c" stroke="#b5b5b5" stroke-width="4"/>
      <circle cx="52" cy="52" r="24" fill="none" stroke="#8c8c8c" stroke-width="4" stroke-dasharray="1 1"/><circle cx="52" cy="52" r="20" fill="#5a5a5a" stroke="#858585" stroke-width="4"/>
      <path d="M52 52h32M52 52L37 24M52 52L37 80" stroke="#bdbdbd" stroke-width="4"/><circle cx="52" cy="52" r="4" fill="#bdbdbd"/><circle cx="52" cy="52" r="2" fill="#333"/></svg></a>
    <span class="dock-sep"></span>
    <a class="app" href="#" aria-label="Monitor de Atividade"><svg viewBox="0 0 104 104">
      <defs><linearGradient id="tA" x2="0" y2="1"><stop offset="0" stop-color="#d5eaf3"/><stop offset="1" stop-color="#7d7d7d"/></linearGradient></defs>
      <rect width="104" height="104" rx="24" fill="url(#tA)"/><rect x="4" y="4" width="96" height="96" rx="20" fill="#000"/><rect x="11" y="12" width="82" height="80" rx="14" fill="#1b2623"/>
      <path d="M26 12v80M39 12v80M52 12v80M65 12v80M78 12v80M11 27h82M11 39h82M11 52h82M11 65h82M11 77h82" stroke="#38685a" stroke-width="1"/>
      <path d="M11 55q4 5 14 8l4-46 5 54q1-11 5-11 10 1 12-6t7-6 9 9 8 1 8 2q2 1 6 0" fill="none" stroke="#58c9a4" stroke-width="1"/><path d="M25 62l4-45 5 52" fill="none" stroke="#8ff0d0" stroke-width="2"/></svg></a>
    <a class="app" href="#" aria-label="Creative Cloud"><span class="cc"><svg viewBox="0 0 104 104">
      <g fill="none" stroke="#fff" stroke-width="5"><path d="M43 34a27 27 0 1 1 19 45H38a23 23 0 1 1 16-40l6 6"/><path d="M38 70l14 9"/></g>
      <circle cx="62" cy="52" r="18" fill="#fff"/><circle cx="38" cy="56" r="14" fill="#fff"/>
      <path d="M42 52l14 12" stroke="#fff" stroke-width="14"/>
      <path d="M46 40l13 13" stroke="#ff5a52" stroke-width="5" stroke-linecap="round"/><path d="M36 56l16 15" stroke="#d48ab8" stroke-width="5" stroke-linecap="round"/></svg></span></a>
    <a class="app running" href="#" aria-label="Photoshop"><span class="ps">Ps</span></a>
    <span class="dock-sep"></span>
    <a class="app" href="#" aria-label="Lixo"><svg class="trash" viewBox="0 0 104 114">
      <defs><linearGradient id="bA"><stop offset="0" stop-color="#6c7175"/><stop offset="0.5" stop-color="#565b5e"/><stop offset="1" stop-color="#7a7f83"/></linearGradient><radialGradient id="bB"><stop offset="0" stop-color="#a9aeb1"/><stop offset="1" stop-color="#6a6f72" stop-opacity="0"/></radialGradient></defs>
      <path d="M6 12q2 56 11 88 3 13 35 13t35-13q9-32 11-88z" fill="url(#bA)"/><ellipse cx="52" cy="12" rx="46" ry="11" fill="#4b5053" stroke="#8b9195" stroke-width="1"/><ellipse cx="36" cy="101" rx="18" ry="11" fill="url(#bB)"/></svg></a>
  </footer>
</body>
</html>
```
FILE: styles.css
```css
* {
  box-sizing: border-box;
}
html, body {
  height: 100%;
  margin: 0;
}
body {
  position: relative;
  display: flex;
  flex-direction: column;
  overflow: hidden;
  background: #000;
  color: #f0f0f0;
  font-family: Inter, "Liberation Sans", sans-serif;
  font-size: 20px;
}
.defs {
  position: absolute;
}
svg {
  display: block;
  flex: none;
}
button {
  margin: 0;
  padding: 0;
  border: 0;
  background: none;
  color: inherit;
  font: inherit;
  display: flex;
  align-items: center;
  justify-content: center;
}

/* System menu bar */
.menubar {
  height: 50px;
  flex: none;
  display: flex;
  align-items: center;
  padding: 0 38px 3px 40px;
  background: linear-gradient(90deg, #000 0%, #010605 38%, #04150f 55%, #082017 75%, #101f15 100%);
  color: #e6e6e6;
  font-size: 26px;
}
.apple {
  margin-bottom: 4px;
}
.menus {
  display: flex;
  gap: 40px;
  margin-left: 43px;
}
.app-name {
  padding-right: 2px;
  font-weight: 700;
}
.status {
  display: flex;
  align-items: center;
  gap: 32px;
  margin-left: auto;
}
.status time {
  font-size: 27px;
}

/* Application window */
.window {
  flex: 1;
  display: flex;
  flex-direction: column;
  border: 2px solid #383838;
  border-width: 2px 0 0 2px;
  border-radius: 12px 0 0 0;
  background: #535353;
}
.titlebar {
  height: 44px;
  flex: none;
  display: grid;
  grid-template-columns: 17fr auto 8fr;
  align-items: center;
  padding-left: 16px;
  border-bottom: 2px solid #383838;
}
.titlebar h1 {
  grid-column: 2;
  margin: 0;
  padding-top: 4px;
  font-size: 25px;
  font-weight: 400;
  color: #dedede;
}
.lights {
  display: flex;
  gap: 16px;
}
.light {
  width: 24px;
  height: 24px;
  border-radius: 50%;
}
.light.close { background: radial-gradient(#7c0704 0 4px, #fd5f57 5px); }
.light.min { background: #febc2e; }
.light.zoom { background: #28c840; }

/* Options bar */
.options {
  height: 68px;
  flex: none;
  display: flex;
  align-items: center;
  border-bottom: 2px solid #383838;
}
.sep {
  width: 2px;
  height: 46px;
  background: #424242;
}
.home {
  width: 104px;
  padding-left: 4px;
}
.current-tool {
  width: 96px;
  gap: 18px;
}
.check {
  display: flex;
  align-items: center;
  gap: 16px;
  white-space: nowrap;
}
.check.auto {
  width: 166px;
  margin-left: 14px;
}
.check.transform {
  width: 258px;
  margin-left: 8px;
}
.check input {
  appearance: none;
  width: 20px;
  height: 20px;
  margin: 0;
  border: 2px solid #858585;
  border-radius: 4px;
  background: #454545;
}
.check input:checked {
  border-color: #dfdfdf;
  background: #dfdfdf;
  position: relative;
}
.check input:checked::after {
  content: "";
  position: absolute;
  left: 5px;
  top: 0;
  width: 6px;
  height: 12px;
  border: solid #333;
  border-width: 0 3px 3px 0;
  transform: rotate(40deg);
}
.select {
  position: relative;
  height: 38px;
}
.select select {
  appearance: none;
  width: 100%;
  height: 100%;
  padding: 0 13px;
  border: 2px solid #666;
  border-radius: 6px;
  background: #454545;
  color: #f0f0f0;
  font: inherit;
}
.select svg {
  position: absolute;
  right: 6px;
  top: 16px;
}
.layer-kind {
  width: 128px;
  margin-right: 8px;
}
.icons {
  display: flex;
  fill: #9b9b9b;
}
.group {
  margin: 0 8px;
}
.group + .group {
  margin-left: 0;
}
.icons svg {
  width: 52px;
  height: 52px;
}
.icons.bright {
  fill: #e6e6e6;
}
.outline {
  fill: none;
  stroke: #979797;
  stroke-width: 2;
}
.solid {
  fill: #979797;
  stroke: none;
}
.mode {
  width: 108px;
  margin-left: 9px;
  color: #868686;
  white-space: nowrap;
}

/* Document tabs */
.tabs {
  height: 58px;
  flex: none;
  display: flex;
  background: #424242;
  border-bottom: 2px solid #383838;
}
.tab {
  display: flex;
  align-items: center;
  gap: 20px;
  padding: 0 20px 0 16px;
  border-right: 2px solid #383838;
  background: #535353;
  font: 700 23px "Open Sans", "Noto Sans", sans-serif;
  white-space: nowrap;
}

.canvas {
  flex: 1;
  position: relative;
  background: #000;
}

/* Floating panels */
.panel-head {
  height: 26px;
  display: flex;
  align-items: center;
  justify-content: space-between;
  padding: 2px 13px 0 10px;
  background: #424242;
  border-bottom: 2px solid #383838;
}
.grip {
  width: 38px;
  height: 8px;
  background: repeating-linear-gradient(90deg, #404040 0 2px, transparent 2px 4px);
}
.toolbox {
  position: absolute;
  left: -2px;
  top: 6px;
  width: 78px;
  border: 2px solid #383838;
  border-radius: 10px 10px 0 0;
  overflow: hidden;
  background: #535353;
  padding-bottom: 4px;
}
.toolbox .grip {
  margin: 6px 0 18px 18px;
}
.tool {
  width: 66px;
  height: 52px;
  margin-left: 4px;
  border-radius: 6px;
}
.tool.active {
  background: #383838;
  box-shadow: inset 0 0 0 2px #636363;
}
.tool svg {
  width: 66px;
  height: 52px;
  fill: none;
}
.tool .line {
  stroke: #dfdfdf;
  stroke-width: 2;
}
.tool .thick {
  stroke-width: 3;
}
.tool .thin {
  stroke-width: 1;
}
.fill {
  fill: #dfdfdf;
}
.more {
  fill: #c4c4c4;
}
.glyph {
  fill: #dfdfdf;
  font: 400 36px "DejaVu Serif", serif;
  text-anchor: middle;
  stroke: #dfdfdf;
  stroke-width: 1;
}
.glyph.small {
  font-size: 26px;
}
.colors {
  height: 112px;
  padding-top: 13px;
}
.color-actions {
  display: flex;
  justify-content: space-between;
  width: 54px;
  margin-left: 8px;
}
.swatches {
  position: relative;
  width: 60px;
  height: 60px;
  margin: 9px 0 0 6px;
}
.swatch {
  position: absolute;
  width: 40px;
  height: 40px;
  border: 2px solid #303030;
  box-shadow: inset 0 0 0 2px #fff;
}
.swatch.back {
  right: 0;
  bottom: 0;
  background: #85978d;
}
.swatch.front {
  left: 0;
  top: 0;
  background: #e4dfd5;
}

.layers {
  position: absolute;
  right: 0;
  top: 118px;
  width: 624px;
  border: 2px solid #383838;
  border-radius: 10px 10px 0 0;
  overflow: hidden;
  background: #535353;
}
.panel-tabs {
  height: 56px;
  display: flex;
  justify-content: space-between;
  background: linear-gradient(#424242, #424242) no-repeat;
  border-bottom: 2px solid #383838;
}
.panel-tabs h2 {
  margin: 0 0 -2px;
  padding: 12px 18px 0;
  border-right: 2px solid #383838;
  background: #535353;
  font: 700 21px "Open Sans", "Noto Sans", sans-serif;
}
.panel-menu {
  margin-right: 10px;
}
.row {
  height: 56px;
  display: flex;
  align-items: center;
  padding: 0 9px 0 7px;
  border-bottom: 2px solid #424242;
  color: #d6d6d6;
}
.filter-row {
  height: 64px;
  padding: 10px 6px 0 7px;
}
.blend-row {
  padding-top: 2px;
}
.lock-row {
  height: 60px;
  padding-left: 10px;
  padding-bottom: 4px;
  border: 0;
}
.filter {
  width: 220px;
}
.select.filter select {
  padding-left: 42px;
}
.filter .lens {
  left: 17px;
  right: auto;
  top: 9px;
}
.filter-icons {
  display: flex;
  align-items: center;
  justify-content: space-between;
  width: 216px;
  margin-left: 75px;
}
.toggle {
  width: 20px;
  height: 38px;
  margin-left: auto;
  align-items: flex-start;
  border: 2px solid #6a6a6a;
  border-radius: 10px;
  background: #454545;
}
.toggle::before {
  content: "";
  width: 16px;
  height: 16px;
  flex: none;
  border-radius: 50%;
  background: #e0e0e0;
}
.blend {
  flex: 1;
}
.row label {
  margin: 0 6px 0 8px;
}
.amount {
  display: flex;
  width: 102px;
  height: 36px;
  border: 2px solid #666;
  border-radius: 6px;
  background: #454545;
}
.amount input {
  width: 72px;
  padding: 0 6px;
  border: 0;
  border-right: 2px solid #666;
  background: none;
  color: #f0f0f0;
  font: inherit;
}
.amount button {
  flex: 1;
  padding-top: 4px;
}
.lock-icons {
  flex: 1;
  display: flex;
  align-items: center;
  gap: 18px;
  margin-left: 13px;
}

/* Layer list */
.list-wrap {
  height: 700px;
  display: flex;
  border-bottom: 2px solid #383838;
  overflow: hidden;
}
.layer-list {
  flex: 1;
  margin: 0;
  padding: 0;
  list-style: none;
}
.layer {
  display: flex;
  height: 82px;
}
.group-row {
  height: 51px;
}
.group-row.nested {
  height: 50px;
}
.vis {
  width: 61px;
  background: #a98a0c;
  border-right: 2px solid #454545;
  border-bottom: 2px solid #51430a;
}
.off {
  width: 24px;
  height: 24px;
  border: 2px solid #8f750c;
}
.info {
  flex: 1;
  display: flex;
  align-items: center;
  border-bottom: 2px solid #454545;
}
.selected .info {
  background: #6a6a6a;
}
.group-row .info {
  gap: 8px;
  padding-left: 5px;
}
.group-row.nested .info {
  padding-left: 37px;
}
.group-row span {
  margin-left: 14px;
}
.pixel .info {
  gap: 12px;
  padding-left: 67px;
}
.adjust .info {
  gap: 8px;
  padding-left: 49px;
}
.adjust span {
  margin-left: 8px;
}
.scroll {
  width: 30px;
  padding: 4px 6px;
  background: #4a4a4a;
}
.thumb {
  height: 386px;
  border-radius: 10px;
  background: #696969;
}
.panel-foot {
  height: 48px;
  display: flex;
  align-items: center;
  justify-content: flex-end;
  gap: 28px;
  padding: 0 54px 2px 0;
}
.panel-foot button {
  position: relative;
  min-width: 26px;
  height: 26px;
}
.panel-foot .fx {
  font: italic 26px "Open Sans", "Noto Sans", sans-serif;
  color: #dfdfdf;
}
.drop::after {
  content: "";
  position: absolute;
  right: -7px;
  bottom: -4px;
  border: 4px solid transparent;
  border-top-color: #fff;
  border-bottom: 0;
}
.resize {
  height: 16px;
  border-top: 4px solid #383838;
}
.resize .grip {
  margin: 0 auto;
}

/* Dock */
.dock {
  position: absolute;
  left: 50%;
  bottom: 11px;
  transform: translateX(-50%);
  display: flex;
  gap: 32px;
  height: 158px;
  padding: 20px 20px 0;
  border: 2px solid #393837;
  border-radius: 48px;
  background: #181715;
}
.app {
  position: relative;
  width: 104px;
  height: 104px;
  color: #fff;
  text-decoration: none;
}
.running::after {
  content: "";
  position: absolute;
  left: 48px;
  bottom: -28px;
  width: 8px;
  height: 8px;
  border-radius: 50%;
  background: #989898;
}
.petals rect {
  opacity: 0.85;
  mix-blend-mode: multiply;
}
.badge {
  position: absolute;
  right: -15px;
  top: -11px;
  height: 48px;
  padding: 0 7px;
  border-radius: 24px;
  background: #f3403a;
  font-size: 25px;
  line-height: 48px;
}
.dock-sep {
  width: 2px;
  height: 118px;
  margin: -2px 14px 0;
  background: #4d4c4b;
}
.cc, .ps {
  display: block;
  height: 104px;
  border-radius: 24px;
}
.cc {
  background:
    radial-gradient(circle at 55% 0%, #ff0000 0 10%, transparent 50%),
    radial-gradient(circle at 90% 100%, #35d84a 0 4%, transparent 42%),
    radial-gradient(circle at 100% 45%, #ff9a00 0 15%, transparent 60%),
    radial-gradient(circle at 10% 100%, #2f8dff 0 14%, transparent 50%),
    radial-gradient(circle at 0% 35%, #ea2ff0 0 20%, transparent 70%),
    #ff7a8a;
}
.ps {
  background: #001d34;
  color: #31a8ff;
  font: 700 62px/96px "Open Sans", "Noto Sans", sans-serif;
  text-align: center;
}
.trash {
  width: 104px;
  margin-top: -4px;
}
```
